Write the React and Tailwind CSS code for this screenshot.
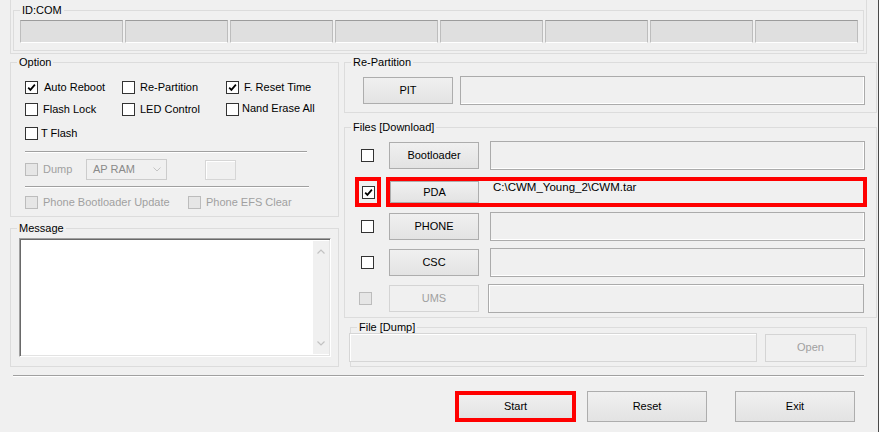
import clsx from "clsx"

const Check = ({ checked, disabled }) => (
  <span
    className={clsx(
      "flex h-[13px] w-[13px] shrink-0 items-center justify-center border",
      disabled ? "border-[#bcbcbc] bg-[#e6e6e6]" : "border-[#333333] bg-white"
    )}
  >
    {checked && (
      <svg width="9" height="9" viewBox="0 0 9 9">
        <path d="M1.2 4.6 L3.4 6.9 L7.9 1.6" fill="none" stroke="#000" strokeWidth="1.7" />
      </svg>
    )}
  </span>
)

const Opt = ({ className, checked, disabled, label, gap = "ml-[5px]" }) => (
  <div className={clsx("flex items-center", className)}>
    <Check checked={checked} disabled={disabled} />
    <span className={clsx(gap, "whitespace-nowrap", disabled && "text-[#a0a0a0]")}>{label}</span>
  </div>
)

const Group = ({ label, className, children }) => (
  <div className={clsx("border border-[#dcdcdc]", className)}>
    <div className="-mt-[7px] ml-[6px] w-fit bg-[#f0f0f0] px-[2px] leading-[13px]">{label}</div>
    {children}
  </div>
)

const Btn = ({ children, className, disabled }) => (
  <div
    className={clsx(
      "flex shrink-0 items-center justify-center border",
      disabled
        ? "border-[#d4d4d4] bg-[#f0f0f0] text-[#a0a0a0]"
        : "border-[#adadad] bg-gradient-to-b from-[#f0f0f0] to-[#e3e3e3]",
      className
    )}
  >
    {children}
  </div>
)

const Field = ({ className, children, dim }) => (
  <div
    className={clsx(
      "shrink-0 border bg-[#f0f0f0]",
      dim
        ? "border-[#d6d6d6] shadow-[inset_1px_1px_0_#ffffff]"
        : "border-[#ababab] shadow-[inset_-1px_-1px_0_#ffffff]",
      className
    )}
  >
    {children}
  </div>
)

const Sep = ({ className }) => (
  <div className={clsx("border-t border-b border-t-[#a0a0a0] border-b-white", className)} />
)

const FileRow = ({ name, className }) => (
  <div className={clsx("flex h-[29px] items-center", className)}>
    <div className="ml-[16px]">
      <Check />
    </div>
    <Btn className="ml-[15px] h-[27px] w-[90px]">{name}</Btn>
    <Field className="ml-[11px] h-[29px] w-[375px]" />
  </div>
)

export default function App() {
  const slots = [0, 1, 2, 3, 4, 5, 6, 7]

  return (
    <div className="flex h-[432px] w-[879px] overflow-hidden bg-[#f0f0f0] font-['Liberation_Sans',Arial,sans-serif] text-[11px] leading-[13px] text-black">
      <div className="w-[878px]">
        {/* ID:COM frame */}
        <div className="ml-[10px] h-[54px] w-[857px] border-x border-b border-[#dcdcdc] pt-[10px]">
          <Group label="ID:COM" className="ml-[2px] h-[41px] w-[851px]">
            <div className="ml-[6px] mt-[3px] flex gap-[2px]">
              {slots.map((i) => (
                <div
                  key={i}
                  className="h-[23px] w-[103px] border border-x-[#bdbdbd] border-t-[#9c9c9c] border-b-white bg-[#dfdfdf]"
                />
              ))}
            </div>
          </Group>
        </div>

        <div className="mt-[8px] flex">
          {/* Left column */}
          <div className="ml-[10px] w-[329px]">
            <Group label="Option" className="h-[155px]">
              <div className="mt-[12px] flex h-[13px] items-center pl-[14px]">
                <Opt className="w-[97px]" checked label="Auto Reboot" gap="ml-[6px]" />
                <Opt className="w-[104px]" label="Re-Partition" />
                <Opt checked label="F. Reset Time" />
              </div>
              <div className="mt-[9px] flex h-[13px] items-center pl-[14px]">
                <Opt className="w-[97px]" label="Flash Lock" />
                <Opt className="w-[104px]" label="LED Control" />
                <Opt label="Nand Erase All" gap="ml-[3px] -mt-[3px]" />
              </div>
              <div className="mt-[11px] flex h-[13px] items-center pl-[14px]">
                <Opt label="T Flash" gap="ml-[3px]" />
              </div>
              <Sep className="ml-[14px] mt-[11px] w-[282px]" />
              <div className="mt-[6px] flex h-[21px] items-center pl-[14px]">
                <Opt className="w-[61px]" disabled label="Dump" />
                <div className="flex h-[21px] w-[81px] items-center justify-between border border-[#cccccc] bg-[#f0f0f0] pl-[6px] pr-[5px] text-[#8a8a8a]">
                  <span>AP RAM</span>
                  <svg width="8" height="5" viewBox="0 0 8 5">
                    <path d="M0.5 0.5 L4 4 L7.5 0.5" fill="none" stroke="#c4c4c4" strokeWidth="1" />
                  </svg>
                </div>
                <div className="ml-[38px] h-[20px] w-[31px] border border-[#d6d6d6] bg-[#f0f0f0] shadow-[inset_1px_1px_0_#ffffff]" />
              </div>
              <Sep className="ml-[14px] mt-[6px] w-[284px]" />
              <div className="mt-[8px] flex h-[13px] items-center pl-[14px]">
                <Opt className="w-[163px]" disabled label="Phone Bootloader Update" />
                <Opt disabled label="Phone EFS Clear" />
              </div>
            </Group>

            <Group label="Message" className="mt-[11px] h-[139px]">
              <div className="ml-[8px] mt-[3px] flex h-[119px] w-[312px] border border-b-white border-l-[#a0a0a0] border-r-white border-t-[#a0a0a0] bg-white shadow-[inset_1px_1px_0_#696969,inset_-1px_-1px_0_#e3e3e3]">
                <div className="flex-1" />
                <div className="my-[2px] mr-[1px] flex w-[16px] flex-col items-center justify-between bg-[#f0f0f0] py-[8px]">
                  <svg width="8" height="5" viewBox="0 0 8 5">
                    <path d="M0.5 4.5 L4 1 L7.5 4.5" fill="none" stroke="#c2c2c2" strokeWidth="1.2" />
                  </svg>
                  <svg width="8" height="5" viewBox="0 0 8 5">
                    <path d="M0.5 0.5 L4 4 L7.5 0.5" fill="none" stroke="#c2c2c2" strokeWidth="1.2" />
                  </svg>
                </div>
              </div>
            </Group>
          </div>

          {/* Right column */}
          <div className="ml-[5px] w-[533px]">
            <Group label="Re-Partition" className="h-[51px]">
              <div className="mt-[7px] flex h-[29px] items-center pl-[18px]">
                <Btn className="h-[27px] w-[90px]">PIT</Btn>
                <Field className="ml-[7px] h-[29px] w-[405px]" />
              </div>
            </Group>

            <Group label="Files [Download]" className="mt-[14px] h-[191px]">
              <FileRow name="Bootloader" className="mt-[7px]" />
              <div className="mt-[7px] flex h-[30px] items-center">
                <div className="ml-[10px] flex h-[30px] w-[26px] items-center justify-center border-4 border-[#ff0000]">
                  <Check checked />
                </div>
                <div className="ml-[5px] flex h-[30px] w-[481px] items-center border-4 border-[#ff0000]">
                  <Btn className="h-[22px] w-[89px]">PDA</Btn>
                  <div className="ml-[10px] h-full flex-1 bg-[#f0f0f0] pl-[4px] text-[11.5px]">C:\CWM_Young_2\CWM.tar</div>
                </div>
              </div>
              <FileRow name="PHONE" className="mt-[5px]" />
              <FileRow name="CSC" className="mt-[7px]" />
              <div className="mt-[7px] flex h-[29px] items-center">
                <div className="ml-[14px]">
                  <Check disabled />
                </div>
                <Btn disabled className="ml-[17px] h-[27px] w-[90px]">UMS</Btn>
                <Field className="ml-[9px] h-[29px] w-[376px] !shadow-[inset_1px_1px_0_#ffffff]" />
              </div>
            </Group>

            <Group label="File [Dump]" className="ml-[6px] mt-[9px] h-[40px] w-[517px]">
              <div className="-mt-[1px] flex items-center">
                <Field dim className="-ml-[2px] h-[29px] w-[408px]" />
                <Btn disabled className="ml-[8px] h-[28px] w-[91px] text-[#8c8c8c]">Open</Btn>
              </div>
            </Group>
          </div>
        </div>

        <Sep className="ml-[13px] mt-[8px] w-[851px]" />

        <div className="mt-[14px] flex">
          <Btn className="ml-[455px] h-[31px] w-[121px] !border-4 !border-[#ff0000]">Start</Btn>
          <Btn className="ml-[11px] h-[31px] w-[120px]">Reset</Btn>
          <Btn className="ml-[28px] h-[31px] w-[120px]">Exit</Btn>
        </div>
      </div>
      <div className="w-[1px] bg-[#4a4a4a]" />
    </div>
  )
}
